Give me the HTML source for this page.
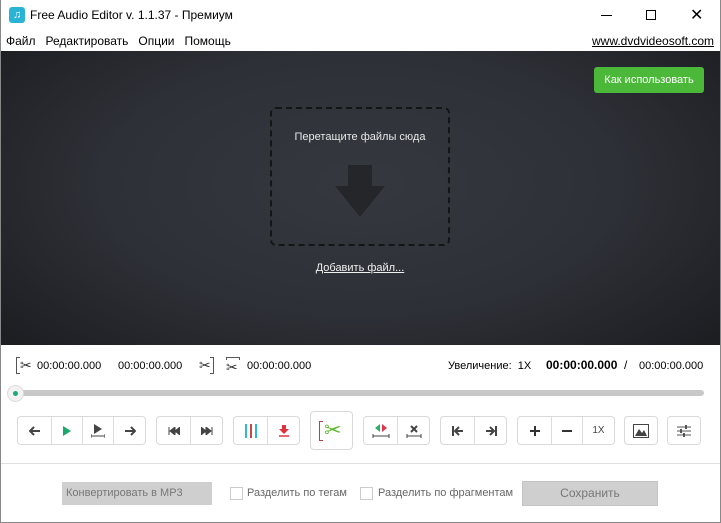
<!DOCTYPE html>
<html><head><meta charset="utf-8"><style>
*{margin:0;padding:0;box-sizing:border-box}
body{width:721px;height:523px;overflow:hidden;background:#fff;font-family:"Liberation Sans",sans-serif;position:relative;color:#000}
.abs{position:absolute}
#win{position:absolute;left:0;top:0;width:721px;height:523px;border:1px solid #888;border-top:none}
.t{font-size:12px;white-space:nowrap}
.s{font-size:11px}
#dark{left:1px;top:51px;width:719px;height:294px;background:radial-gradient(ellipse 65% 80% at 50% 45%,#35383f 0%,#2e3037 55%,#1d1e22 100%)}
.grp{position:absolute;top:416px;height:29px;border:1px solid #d9d9d9;border-radius:4px;background:#fff;display:flex}
.grp>div{border-left:1px solid #dcdcdc;display:flex;align-items:center;justify-content:center;height:100%}
.grp>div:first-child{border-left:none}
svg{display:block}
</style></head><body>
<div id="win"></div>
<div class="abs" style="left:9px;top:7px;width:16px;height:16px;background:#2bb3d6;border-radius:3px"></div>
<div class="abs" style="left:13px;top:9px;color:#fff;font-size:11px;font-weight:bold">♫</div>
<div class="abs t" style="left:30px;top:8px;font-size:12px">Free Audio Editor v. 1.1.37 - Премиум</div>
<div class="abs" style="left:601px;top:15px;width:11px;height:1px;background:#000"></div>
<div class="abs" style="left:646px;top:10px;width:10px;height:10px;border:1px solid #000"></div>
<div class="abs t" style="left:690px;top:5px;font-size:16px;font-weight:300">✕</div>
<div class="abs t" style="left:6px;top:34px">Файл&nbsp;&nbsp; Редактировать&nbsp;&nbsp; Опции&nbsp;&nbsp; Помощь</div>
<div class="abs t" style="left:592px;top:34px;text-decoration:underline">www.dvdvideosoft.com</div>
<div id="dark" class="abs"></div>
<div class="abs t s" style="left:594px;top:67px;width:110px;height:26px;background:#4cb83a;border-radius:3px;color:#fff;text-align:center;line-height:26px">Как использовать</div>
<div class="abs" style="left:270px;top:107px;width:180px;height:139px;border:2px dashed #151515;border-radius:6px"></div>
<div class="abs t s" style="left:270px;top:131px;width:180px;text-align:center;color:#e8e8e8">Перетащите файлы сюда</div>
<div class="abs" style="left:348px;top:165px;width:24px;height:22px;background:#24262a"></div>
<div class="abs" style="left:335px;top:186px;width:0;height:0;border-left:25px solid transparent;border-right:25px solid transparent;border-top:31px solid #24262a"></div>
<div class="abs t s" style="left:270px;top:262px;width:180px;text-align:center;color:#f0f0f0;text-decoration:underline">Добавить файл...</div>
<div class="abs" style="left:16px;top:357px;width:4px;height:17px;border:1px solid #555;border-right:none"></div>
<div class="abs t" style="left:20px;top:357px;font-size:14px;color:#333">✂</div>
<div class="abs t s" style="left:37px;top:360px">00:00:00.000</div>
<div class="abs t s" style="left:118px;top:360px">00:00:00.000</div>
<div class="abs t" style="left:199px;top:357px;font-size:14px;color:#333">✂</div>
<div class="abs" style="left:210px;top:357px;width:4px;height:17px;border:1px solid #555;border-left:none"></div>
<div class="abs" style="left:226px;top:357px;width:14px;height:3px;border:1px solid #555;border-bottom:none"></div>
<div class="abs t" style="left:226px;top:359px;font-size:14px;color:#333">✂</div>
<div class="abs t s" style="left:247px;top:360px">00:00:00.000</div>
<div class="abs t s" style="left:448px;top:360px">Увеличение:&nbsp; 1X</div>
<div class="abs t" style="left:546px;top:358px;font-weight:bold">00:00:00.000</div>
<div class="abs t" style="left:624px;top:358px">/</div>
<div class="abs t s" style="left:639px;top:360px">00:00:00.000</div>
<div class="abs" style="left:16px;top:390px;width:688px;height:6px;background:#c8c8c8;border-radius:3px"></div>
<div class="abs" style="left:7px;top:385px;width:17px;height:17px;border-radius:50%;background:#f2f2f2;border:1px solid #ddd"></div>
<div class="abs" style="left:13px;top:391px;width:5px;height:5px;border-radius:50%;background:#1fa97a"></div>
<div class="grp" style="left:17px;width:129px">
 <div style="width:33px"><svg width="12" height="10"><path d="M1 5h10M5 1L1 5l4 4" stroke="#444" stroke-width="2" fill="none"/></svg></div>
 <div style="width:31px"><svg width="10" height="10"><path d="M1 0l8 5-8 5z" fill="#1aa86c"/></svg></div>
 <div style="width:31px"><svg width="14" height="14"><path d="M3 0l8 5-8 5z" fill="#444"/><path d="M0 12h14M0 10v4M14 10v4" stroke="#444" fill="none"/></svg></div>
 <div style="width:32px"><svg width="12" height="10"><path d="M1 5h10M7 1l4 4-4 4" stroke="#444" stroke-width="2" fill="none"/></svg></div>
</div>
<div class="grp" style="left:156px;width:67px">
 <div style="width:33px"><svg width="12" height="8"><path d="M1 0v8M7 0L2 4l5 4zM12 0L7 4l5 4z" fill="#444" stroke="#444"/></svg></div>
 <div style="width:32px"><svg width="12" height="8"><path d="M11 0v8M5 0l5 4-5 4zM0 0l5 4-5 4z" fill="#444" stroke="#444"/></svg></div>
</div>
<div class="grp" style="left:233px;width:67px">
 <div style="width:33px"><svg width="14" height="14"><path d="M2 0v14M7 0v14M12 0v14" stroke="#2db8e0" stroke-width="2"/><path d="M7 0v14" stroke="#d0454a" stroke-width="2"/></svg></div>
 <div style="width:32px"><svg width="10" height="12"><path d="M3 0h4v4h3L5 9 0 4h3z" fill="#e0343c"/><path d="M0 11h10" stroke="#e0343c" stroke-width="1.5"/></svg></div>
</div>
<div class="abs" style="left:310px;top:411px;width:43px;height:39px;border:1px solid #d9d9d9;border-radius:4px;background:#fff"></div>
<div class="abs" style="left:319px;top:421px;width:4px;height:20px;border:1px solid #b8404a;border-right:none"></div>
<div class="abs t" style="left:324px;top:418px;font-size:21px;color:#5cb82c">✂</div>
<div class="grp" style="left:363px;width:67px">
 <div style="width:33px"><svg width="18" height="14"><path d="M8 0L3 4l5 4z" fill="#2bb36b"/><path d="M10 0l5 4-5 4z" fill="#e0344a"/><path d="M1 12h16M1 10v4M17 10v4" stroke="#444" fill="none"/></svg></div>
 <div style="width:32px"><svg width="16" height="14"><path d="M5 2l6 6M11 2L5 8" stroke="#444" stroke-width="2"/><path d="M1 12h14M1 10v4M15 10v4" stroke="#444" fill="none"/></svg></div>
</div>
<div class="grp" style="left:440px;width:67px">
 <div style="width:33px"><svg width="12" height="10"><path d="M1 0v10M11 5H3M7 1L3 5l4 4" stroke="#444" stroke-width="2" fill="none"/></svg></div>
 <div style="width:32px"><svg width="12" height="10"><path d="M11 0v10M1 5h8M5 1l4 4-4 4" stroke="#444" stroke-width="2" fill="none"/></svg></div>
</div>
<div class="grp" style="left:517px;width:98px">
 <div style="width:33px"><svg width="10" height="10"><path d="M5 0v10M0 5h10" stroke="#333" stroke-width="2"/></svg></div>
 <div style="width:31px"><svg width="10" height="10"><path d="M0 5h10" stroke="#333" stroke-width="2"/></svg></div>
 <div style="width:32px;font-size:10px;color:#444">1X</div>
</div>
<div class="grp" style="left:624px;width:34px">
 <div style="width:32px"><svg width="16" height="14"><rect x="0.5" y="0.5" width="15" height="13" fill="none" stroke="#444"/><path d="M2 12l4-7 3 4 2-3 3 6z" fill="#444"/></svg></div>
</div>
<div class="grp" style="left:667px;width:34px">
 <div style="width:32px"><svg width="14" height="12"><path d="M0 2h14M0 6h14M0 10h14" stroke="#555"/><path d="M9 0v4M4 4v4M7 8v4" stroke="#555" stroke-width="2"/></svg></div>
</div>
<div class="abs" style="left:1px;top:463px;width:719px;height:1px;background:#e0e0e0"></div>
<div class="abs t s" style="left:62px;top:482px;width:150px;height:23px;background:#cfcfcf;line-height:23px;padding-left:4px;color:#777">Конвертировать в MP3</div>
<div class="abs" style="left:230px;top:487px;width:13px;height:13px;border:1px solid #ccc;background:#fff"></div>
<div class="abs t s" style="left:247px;top:487px;color:#666">Разделить по тегам</div>
<div class="abs" style="left:360px;top:487px;width:13px;height:13px;border:1px solid #ccc;background:#fff"></div>
<div class="abs t s" style="left:378px;top:487px;color:#666">Разделить по фрагментам</div>
<div class="abs t" style="left:522px;top:481px;width:136px;height:25px;background:#cfcfcf;border:1px solid #c4c4c4;text-align:center;line-height:23px;color:#777">Сохранить</div>
</body></html>
